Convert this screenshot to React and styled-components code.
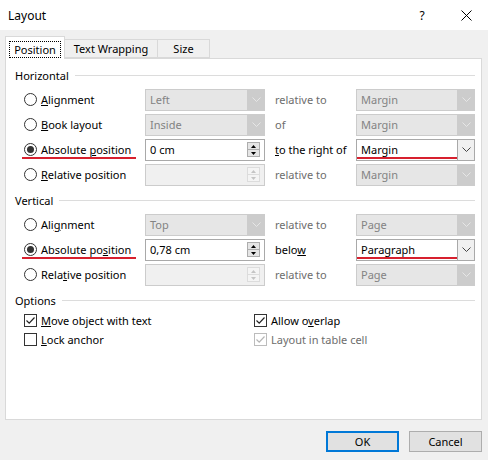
import styled, { createGlobalStyle } from "styled-components"

const GlobalStyle = createGlobalStyle`
  html, body { margin: 0; padding: 0; }
  body {
    font-family: "Noto Sans", "Open Sans", sans-serif;
    font-size: 11px;
    color: #000;
    background: #f0f0f0;
  }
  * { box-sizing: border-box; }
`

export default function App() {
  return (
    <Window>
      <GlobalStyle />
      <TitleBar>
        <Title>Layout</Title>
        <HelpButton>?</HelpButton>
        <CloseButton>
          <svg width="11" height="11" viewBox="0 0 11 11">
            <path d="M0.5 0.5 L10.5 10.5 M10.5 0.5 L0.5 10.5" stroke="#000" strokeWidth="1" fill="none" />
          </svg>
        </CloseButton>
      </TitleBar>

      <TabStrip>
        <Tab selected width={60}><Focus>Position</Focus></Tab>
        <Tab width={93}>Text Wrapping</Tab>
        <Tab width={52}>Size</Tab>
      </TabStrip>

      <Panel>
        <Section>
          <Header><span>Horizontal</span><Rule /></Header>
          <Grid>
            <RadioCell>
              <Radio />
              <span><u>A</u>lignment</span>
            </RadioCell>
            <Combo disabled value="Left" />
            <RelLabel disabled>relative to</RelLabel>
            <Combo disabled value="Margin" />

            <RadioCell>
              <Radio />
              <span><u>B</u>ook layout</span>
            </RadioCell>
            <Combo disabled value="Inside" />
            <RelLabel disabled>of</RelLabel>
            <Combo disabled value="Margin" />

            <RadioCell marked>
              <Radio checked />
              <span>Absolute <u>p</u>osition</span>
            </RadioCell>
            <Spin value="0 cm" />
            <RelLabel><u>t</u>o the right of</RelLabel>
            <Combo value="Margin" marked />

            <RadioCell>
              <Radio />
              <span><u>R</u>elative position</span>
            </RadioCell>
            <Spin disabled />
            <RelLabel disabled>relative to</RelLabel>
            <Combo disabled value="Margin" />
          </Grid>
        </Section>

        <Section>
          <Header><span>Vertical</span><Rule /></Header>
          <Grid>
            <RadioCell>
              <Radio />
              <span>Ali<u>g</u>nment</span>
            </RadioCell>
            <Combo disabled value="Top" />
            <RelLabel disabled>relative to</RelLabel>
            <Combo disabled value="Page" />

            <RadioCell marked>
              <Radio checked />
              <span>Absolute po<u>s</u>ition</span>
            </RadioCell>
            <Spin value="0,78 cm" />
            <RelLabel>belo<u>w</u></RelLabel>
            <Combo value="Paragraph" marked />

            <RadioCell>
              <Radio />
              <span>Rela<u>t</u>ive position</span>
            </RadioCell>
            <Spin disabled />
            <RelLabel disabled>relative to</RelLabel>
            <Combo disabled value="Page" />
          </Grid>
        </Section>

        <Section>
          <Header tight><span>Options</span><Rule /></Header>
          <Checks>
            <CheckCell>
              <Check checked />
              <span><u>M</u>ove object with text</span>
            </CheckCell>
            <CheckCell>
              <Check checked />
              <span>Allow o<u>v</u>erlap</span>
            </CheckCell>
            <CheckCell>
              <Check />
              <span><u>L</u>ock anchor</span>
            </CheckCell>
            <CheckCell disabled>
              <Check checked disabled />
              <span>Layout in table cell</span>
            </CheckCell>
          </Checks>
        </Section>
      </Panel>

      <Footer>
        <Button primary>OK</Button>
        <Button>Cancel</Button>
      </Footer>
    </Window>
  )
}

function Radio({ checked }) {
  return <RadioBox>{checked && <Dot />}</RadioBox>
}

function Check({ checked, disabled }) {
  return (
    <CheckBox disabled={disabled}>
      {checked && (
        <svg width="11" height="11" viewBox="0 0 11 11">
          <path d="M1.5 5.5 L4.2 8.2 L9.5 2.5" stroke={disabled ? "#b5b5b5" : "#222"} strokeWidth="1.2" fill="none" />
        </svg>
      )}
    </CheckBox>
  )
}

function Combo({ value, disabled, marked }) {
  return (
    <ComboBox disabled={disabled}>
      <ComboText disabled={disabled} marked={marked}>{value}</ComboText>
      <ComboArrow disabled={disabled}>
        <svg width="9" height="5" viewBox="0 0 9 5">
          <path d="M0.5 0.5 L4.5 4.5 L8.5 0.5" stroke={disabled ? "#e6e6e6" : "#444"} strokeWidth="1" fill="none" />
        </svg>
      </ComboArrow>
    </ComboBox>
  )
}

function Spin({ value, disabled }) {
  const c = disabled ? "#c4c4c4" : "#000"
  return (
    <SpinBox disabled={disabled}>
      <ComboText>{value}</ComboText>
      <Spinner>
        <SpinButton disabled={disabled}>
          <svg width="5" height="3" viewBox="0 0 5 3"><path d="M0 3 L2.5 0 L5 3 Z" fill={c} /></svg>
        </SpinButton>
        <SpinButton disabled={disabled}>
          <svg width="5" height="3" viewBox="0 0 5 3"><path d="M0 0 L2.5 3 L5 0 Z" fill={c} /></svg>
        </SpinButton>
      </Spinner>
    </SpinBox>
  )
}

const Window = styled.div`
  width: 488px;
  height: 460px;
  background: #f0f0f0;
  display: flex;
  flex-direction: column;
  overflow: hidden;
`

const TitleBar = styled.div`
  height: 30px;
  background: #fff;
  display: flex;
  align-items: center;
  padding-left: 8px;
  font-size: 12px;
`

const Title = styled.div`
  flex: 1;
`

const HelpButton = styled.div`
  width: 28px;
  margin-right: 8px;
  text-align: center;
  font-size: 12px;
`

const CloseButton = styled.div`
  width: 44px;
  height: 30px;
  display: flex;
  align-items: center;
  justify-content: center;
`

const TabStrip = styled.div`
  height: 28px;
  display: flex;
  align-items: flex-end;
  padding-left: 5px;
`

const Tab = styled.div`
  width: ${(p) => p.width}px;
  height: ${(p) => (p.selected ? "23px" : "19px")};
  margin-bottom: ${(p) => (p.selected ? "-1px" : "0")};
  padding-top: ${(p) => (p.selected ? "4px" : "0")};
  display: flex;
  align-items: ${(p) => (p.selected ? "flex-start" : "center")};
  justify-content: center;
  background: ${(p) => (p.selected ? "#fff" : "#f0f0f0")};
  border: 1px solid #d9d9d9;
  border-bottom: ${(p) => (p.selected ? "none" : "1px solid #d9d9d9")};
  border-left: ${(p) => (p.selected ? "1px solid #d9d9d9" : "none")};
  position: relative;
  z-index: ${(p) => (p.selected ? 1 : 0)};
`

const Focus = styled.span`
  border: 1px dotted #000;
  padding: 0 4px;
  height: 17px;
  display: flex;
  align-items: center;
`

const Panel = styled.div`
  margin: 0 6px 0 5px;
  height: 362px;
  background: #fff;
  border: 1px solid #d9d9d9;
  padding: 9px 6px 0 9px;
`

const Section = styled.div`
  margin-bottom: 6px;
`

const Header = styled.div`
  height: 14px;
  display: flex;
  align-items: center;
  gap: 6px;
  margin-bottom: ${(p) => (p.tight ? "4px" : "5px")};
`

const Rule = styled.div`
  flex: 1;
  height: 1px;
  background: #dcdcdc;
`

const Grid = styled.div`
  display: grid;
  grid-template-columns: 121px 120px 91px 119px;
  grid-auto-rows: 25px;
  align-items: center;
  padding-left: 9px;
`

const RadioCell = styled.div`
  display: flex;
  align-items: center;
  gap: 4px;
  height: 16px;
  position: relative;

  &::after {
    content: "";
    display: ${(p) => (p.marked ? "block" : "none")};
    position: absolute;
    left: -2px;
    width: 114px;
    top: 15px;
    height: 2px;
    background: #d7202e;
  }
`

const RadioBox = styled.div`
  width: 13px;
  height: 13px;
  border: 1px solid #333;
  border-radius: 50%;
  background: #fff;
  display: flex;
  align-items: center;
  justify-content: center;
`

const Dot = styled.div`
  width: 7px;
  height: 7px;
  border-radius: 50%;
  background: #333;
`

const RelLabel = styled.div`
  padding-left: 10px;
  color: ${(p) => (p.disabled ? "#6d6d6d" : "#000")};
`

const ComboBox = styled.div`
  height: 22px;
  display: flex;
  border: 1px solid ${(p) => (p.disabled ? "#cccccc" : "#a9a9a9")};
  background: ${(p) => (p.disabled ? "#e6e6e6" : "#fff")};
`

const ComboText = styled.div`
  flex: 1;
  display: flex;
  align-items: center;
  padding-left: 4px;
  color: ${(p) => (p.disabled ? "#838383" : "#000")};
  position: relative;

  &::after {
    content: "";
    display: ${(p) => (p.marked ? "block" : "none")};
    position: absolute;
    left: 0;
    right: 0;
    bottom: 1px;
    height: 2px;
    background: #d7202e;
  }
`

const ComboArrow = styled.div`
  width: 17px;
  display: flex;
  align-items: center;
  justify-content: center;
  background: ${(p) => (p.disabled ? "#cccccc" : "#f0f0f0")};
  border-left: 1px solid ${(p) => (p.disabled ? "#cccccc" : "#a9a9a9")};
`

const SpinBox = styled.div`
  height: 22px;
  display: flex;
  align-items: center;
  border: 1px solid ${(p) => (p.disabled ? "#cccccc" : "#a9a9a9")};
  background: ${(p) => (p.disabled ? "#f0f0f0" : "#fff")};
  padding-right: 4px;
`

const Spinner = styled.div`
  display: flex;
  flex-direction: column;
`

const SpinButton = styled.div`
  width: 13px;
  height: 8px;
  display: flex;
  align-items: center;
  justify-content: center;
  background: ${(p) => (p.disabled ? "#f4f4f4" : "#e5e5e5")};
  border: 1px solid ${(p) => (p.disabled ? "#dcdcdc" : "#adadad")};
  & + & { border-top: none; height: 7px; }
`

const Checks = styled.div`
  display: grid;
  grid-template-columns: 230px 1fr;
  grid-auto-rows: 19px;
  align-items: center;
  padding-left: 9px;
`

const CheckCell = styled.div`
  display: flex;
  align-items: center;
  gap: 4px;
  color: ${(p) => (p.disabled ? "#6d6d6d" : "#000")};
`

const CheckBox = styled.div`
  width: 13px;
  height: 13px;
  border: 1px solid ${(p) => (p.disabled ? "#bcbcbc" : "#333")};
  background: #fff;
  display: flex;
  align-items: center;
  justify-content: center;
`

const Footer = styled.div`
  display: flex;
  justify-content: flex-end;
  gap: 10px;
  padding: 11px 6px 0 0;
`

const Button = styled.button`
  width: 73px;
  height: 21px;
  padding: 0;
  font-family: inherit;
  font-size: 11px;
  color: #000;
  background: #e1e1e1;
  border: ${(p) => (p.primary ? "2px solid #0078d7" : "1px solid #adadad")};
`
